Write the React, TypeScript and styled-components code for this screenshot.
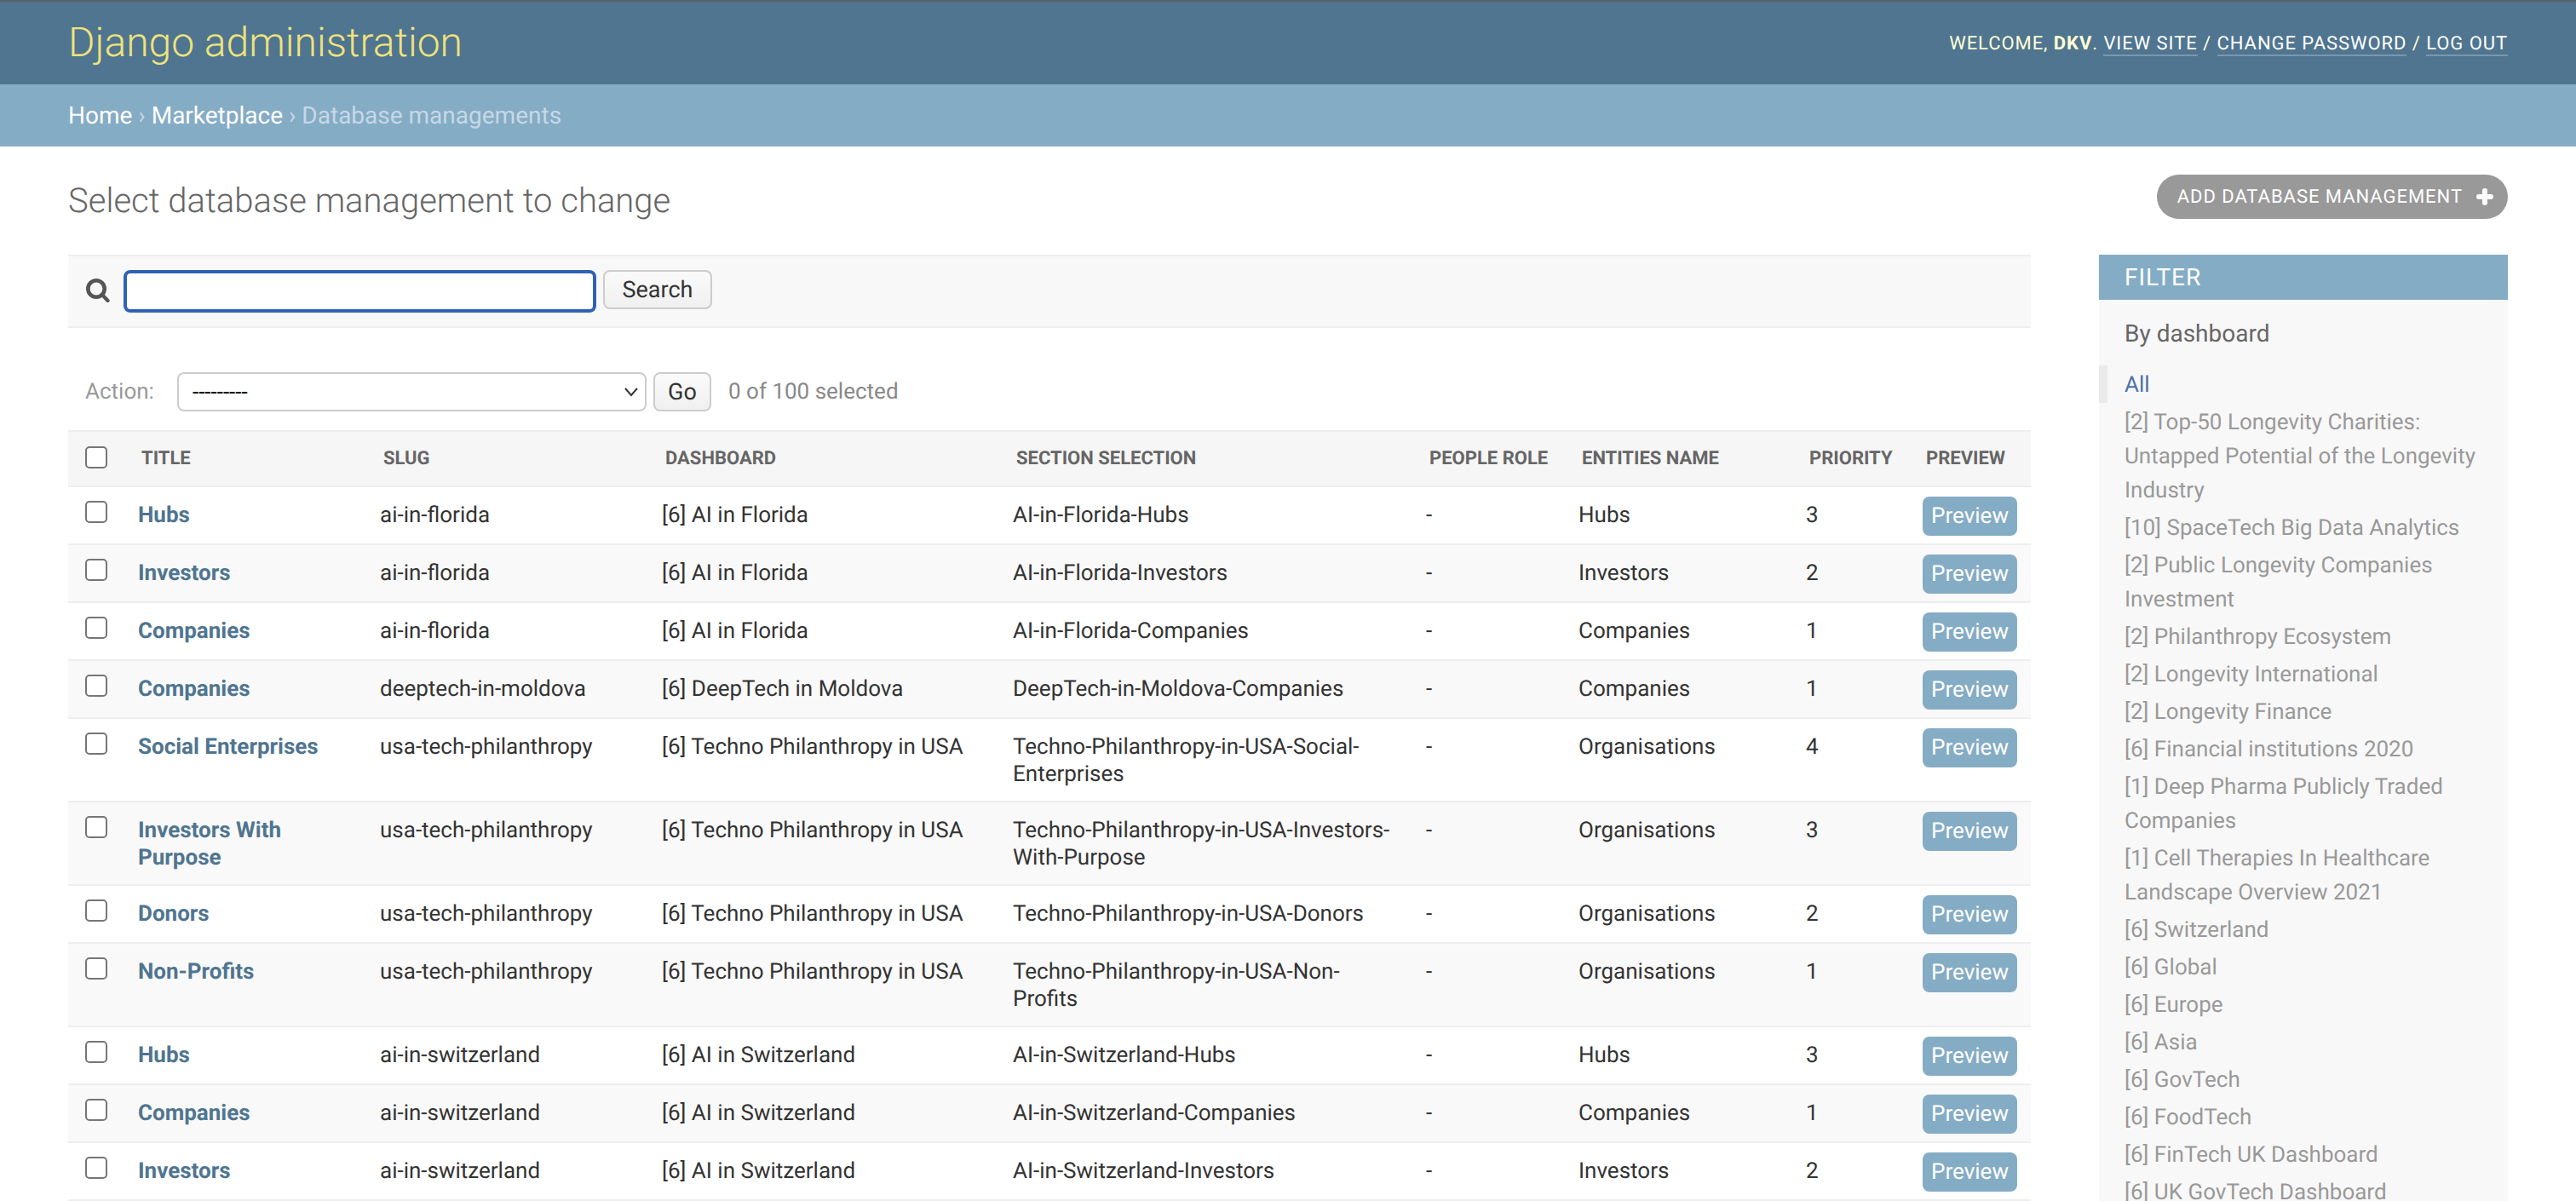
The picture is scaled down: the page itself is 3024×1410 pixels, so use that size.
import React from 'react';
import styled, { createGlobalStyle } from 'styled-components';

const GlobalStyle = createGlobalStyle`
  html, body {
    margin: 0;
    padding: 0;
    height: 100%;
    overflow: hidden;
    background: #fff;
  }
  body {
    font-family: Roboto, "Liberation Sans", Arial, sans-serif;
    font-size: 28px;
    color: #333;
    text-rendering: geometricPrecision;
  }
`;

const columns = [66, 284, 331, 412, 485, 179, 267, 137, 143];

const rows = [
  ['Hubs', 'ai-in-florida', '[6] AI in Florida', 'AI-in-Florida-Hubs', '-', 'Hubs', '3'],
  ['Investors', 'ai-in-florida', '[6] AI in Florida', 'AI-in-Florida-Investors', '-', 'Investors', '2'],
  ['Companies', 'ai-in-florida', '[6] AI in Florida', 'AI-in-Florida-Companies', '-', 'Companies', '1'],
  ['Companies', 'deeptech-in-moldova', '[6] DeepTech in Moldova', 'DeepTech-in-Moldova-Companies', '-', 'Companies', '1'],
  ['Social Enterprises', 'usa-tech-philanthropy', '[6] Techno Philanthropy in USA', 'Techno-Philanthropy-in-USA-Social-Enterprises', '-', 'Organisations', '4'],
  ['Investors With Purpose', 'usa-tech-philanthropy', '[6] Techno Philanthropy in USA', 'Techno-Philanthropy-in-USA-Investors-With-Purpose', '-', 'Organisations', '3'],
  ['Donors', 'usa-tech-philanthropy', '[6] Techno Philanthropy in USA', 'Techno-Philanthropy-in-USA-Donors', '-', 'Organisations', '2'],
  ['Non-Profits', 'usa-tech-philanthropy', '[6] Techno Philanthropy in USA', 'Techno-Philanthropy-in-USA-Non-Profits', '-', 'Organisations', '1'],
  ['Hubs', 'ai-in-switzerland', '[6] AI in Switzerland', 'AI-in-Switzerland-Hubs', '-', 'Hubs', '3'],
  ['Companies', 'ai-in-switzerland', '[6] AI in Switzerland', 'AI-in-Switzerland-Companies', '-', 'Companies', '1'],
  ['Investors', 'ai-in-switzerland', '[6] AI in Switzerland', 'AI-in-Switzerland-Investors', '-', 'Investors', '2'],
];

const headings = ['Title', 'Slug', 'Dashboard', 'Section selection', 'People role', 'Entities name', 'Priority', 'Preview'];

const filters = [
  '[2] Top-50 Longevity Charities: Untapped Potential of the Longevity Industry',
  '[10] SpaceTech Big Data Analytics',
  '[2] Public Longevity Companies Investment',
  '[2] Philanthropy Ecosystem',
  '[2] Longevity International',
  '[2] Longevity Finance',
  '[6] Financial institutions 2020',
  '[1] Deep Pharma Publicly Traded Companies',
  '[1] Cell Therapies In Healthcare Landscape Overview 2021',
  '[6] Switzerland',
  '[6] Global',
  '[6] Europe',
  '[6] Asia',
  '[6] GovTech',
  '[6] FoodTech',
  '[6] FinTech UK Dashboard',
  '[6] UK GovTech Dashboard',
];

function App() {
  return (
    <Page>
      <GlobalStyle />
      <Header>
        <Branding>Django administration</Branding>
        <UserTools>
          Welcome, <strong>dkv</strong>. <TopLink>View site</TopLink> / <TopLink>Change password</TopLink> / <TopLink>Log out</TopLink>
        </UserTools>
      </Header>
      <Breadcrumbs>
        <a>Home</a> <Sep>›</Sep> <a>Marketplace</a> <Sep>›</Sep> Database managements
      </Breadcrumbs>
      <Content>
        <TitleRow>
          <Title>Select database management to change</Title>
          <AddButton>
            Add database management
            <svg width="20" height="20" viewBox="0 0 20 20">
              <path d="M10 3v14M3 10h14" stroke="#fff" strokeWidth="6" strokeLinecap="round" />
            </svg>
          </AddButton>
        </TitleRow>
        <Columns>
          <Main>
            <SearchBar>
              <svg width="28" height="28" viewBox="0 0 28 28">
                <circle cx="12" cy="12" r="9.7" fill="none" stroke="#555" strokeWidth="4.6" />
                <path d="M19 19l6.5 7" fill="none" stroke="#555" strokeWidth="4.2" strokeLinecap="round" />
              </svg>
              <SearchInput />
              <PlainButton $width={128}>Search</PlainButton>
            </SearchBar>
            <Actions>
              <ActionLabel>Action:</ActionLabel>
              <SelectWrap>
                <ActionSelect>
                  <option>---------</option>
                </ActionSelect>
                <Chevron width="20" height="14" viewBox="0 0 20 14">
                  <path d="M3 3l7 8 7-8" fill="none" stroke="#333" strokeWidth="2" />
                </Chevron>
              </SelectWrap>
              <PlainButton $width={68}>Go</PlainButton>
              <Counter>0 of 100 selected</Counter>
            </Actions>
            <Table>
              <colgroup>
                {columns.map((w, i) => (
                  <Col key={i} $width={w} />
                ))}
              </colgroup>
              <thead>
                <tr>
                  <HeadCheckCell>
                    <Check />
                  </HeadCheckCell>
                  {headings.map((h) => (
                    <HeadCell key={h}>{h}</HeadCell>
                  ))}
                </tr>
              </thead>
              <tbody>
                {rows.map((r, i) => (
                  <Row key={i} $even={i % 2 === 1}>
                    <CheckCell>
                      <Check />
                    </CheckCell>
                    <Cell>
                      <TitleLink>{r[0]}</TitleLink>
                    </Cell>
                    {r.slice(1).map((v, j) => (
                      <Cell key={j}>{v}</Cell>
                    ))}
                    <PreviewCell>
                      <PreviewButton>Preview</PreviewButton>
                    </PreviewCell>
                  </Row>
                ))}
              </tbody>
            </Table>
          </Main>
          <Filter>
            <FilterTitle>Filter</FilterTitle>
            <FilterGroup>By dashboard</FilterGroup>
            <FilterList>
              <FilterItem $selected>All</FilterItem>
              {filters.map((f) => (
                <FilterItem key={f}>{f}</FilterItem>
              ))}
            </FilterList>
          </Filter>
        </Columns>
      </Content>
    </Page>
  );
}

const Page = styled.div`
  height: 100vh;
  overflow: hidden;
`;

const Header = styled.div`
  display: flex;
  align-items: center;
  justify-content: space-between;
  box-sizing: border-box;
  height: 99px;
  padding: 0 80px;
  background: #4f7590;
  border-top: 2px solid #5c6068;
`;

const Branding = styled.h1`
  margin: 0 0 2px;
  font-size: 48px;
  font-weight: 300;
  color: #f0e27c;
`;

const UserTools = styled.div`
  margin-top: 1px;
  font-size: 22px;
  letter-spacing: 0.94px;
  text-transform: uppercase;
  color: #ffffd6;

  strong {
    font-weight: 700;
  }
`;

const TopLink = styled.a`
  color: #fff;
  border-bottom: 2px solid rgba(255, 255, 255, 0.25);
`;

const Breadcrumbs = styled.div`
  box-sizing: border-box;
  height: 73px;
  padding: 0 80px;
  line-height: 73px;
  font-size: 28px;
  color: #c5d8e5;
  background: #85acc5;

  a {
    color: #fff;
  }
`;

const Sep = styled.span`
  color: #c5d8e5;
`;

const Content = styled.div`
  padding: 33px 80px 0;
`;

const TitleRow = styled.div`
  display: flex;
  align-items: center;
  justify-content: space-between;
  height: 52px;
  margin-bottom: 42px;
`;

const Title = styled.h1`
  margin: 8px 0 0;
  font-size: 40px;
  font-weight: 300;
  color: #666;
`;

const AddButton = styled.a`
  display: flex;
  align-items: center;
  gap: 16px;
  height: 52px;
  box-sizing: border-box;
  padding: 0 17px 0 24px;
  border-radius: 26px;
  background: #999;
  color: #fff;
  font-size: 22px;
  letter-spacing: 0.96px;
  text-transform: uppercase;
`;

const Columns = styled.div`
  display: flex;
  align-items: flex-start;
  gap: 80px;
`;

const Main = styled.div`
  flex: 1;
  min-width: 0;
`;

const SearchBar = styled.div`
  display: flex;
  align-items: flex-start;
  box-sizing: border-box;
  height: 86px;
  padding: 16px 20px 0;
  background: #f8f8f8;
  border-top: 2px solid #eee;
  border-bottom: 2px solid #eee;

  svg {
    margin: 10px 16px 0 1px;
    flex: none;
  }
`;

const SearchInput = styled.div`
  box-sizing: border-box;
  width: 555px;
  height: 50px;
  margin-right: 8px;
  background: #fff;
  border: 4px solid #2f62b5;
  border-radius: 8px;
`;

const PlainButton = styled.button<{ $width: number }>`
  box-sizing: border-box;
  width: ${(p) => p.$width}px;
  height: 46px;
  padding: 0;
  background: linear-gradient(#fafafa, #f0f0f0);
  border: 2px solid #ccc;
  border-radius: 8px;
  font-family: Roboto, sans-serif;
  font-size: 27px;
  color: #333;
  text-rendering: geometricPrecision;
`;

const Actions = styled.div`
  display: flex;
  align-items: center;
  height: 46px;
  margin: 52px 0 22px;
  padding-left: 20px;
`;

const ActionLabel = styled.label`
  width: 108px;
  font-size: 26px;
  color: #999;
`;

const SelectWrap = styled.div`
  position: relative;
  width: 551px;
  height: 46px;
  margin-right: 8px;
`;

const ActionSelect = styled.select`
  appearance: none;
  box-sizing: border-box;
  width: 100%;
  height: 100%;
  padding: 0 16px;
  background: #fff;
  border: 2px solid #ccc;
  border-radius: 8px;
  font-family: Roboto, sans-serif;
  font-size: 26px;
  color: #000;
`;

const Chevron = styled.svg`
  position: absolute;
  top: 16px;
  right: 8px;
`;

const Counter = styled.span`
  margin: -1px 0 0 20px;
  font-size: 26px;
  color: #888;
`;

const Table = styled.table`
  width: 100%;
  table-layout: fixed;
  border-collapse: separate;
  border-spacing: 0;
`;

const Col = styled.col<{ $width: number }>`
  width: ${(p) => p.$width}px;
`;

const HeadCell = styled.th`
  box-sizing: border-box;
  height: 67px;
  padding: 0 0 0 20px;
  text-align: left;
  vertical-align: middle;
  white-space: nowrap;
  font-size: 22px;
  font-weight: 700;
  text-transform: uppercase;
  color: #666;
  background: #f6f6f6;
  border-top: 2px solid #eee;
  border-bottom: 2px solid #eee;
`;

const HeadCheckCell = styled(HeadCell)`
  padding-bottom: 4px;
`;

const Row = styled.tr<{ $even: boolean }>`
  background: ${(p) => (p.$even ? '#f9f9f9' : '#fff')};
`;

const Cell = styled.td`
  padding: 17px 16px 15px;
  vertical-align: top;
  font-size: 26px;
  line-height: 32px;
  color: #333;
  border-bottom: 2px solid #eee;
`;

const CheckCell = styled(Cell)`
  padding: 16px 0 0 20px;
`;

const PreviewCell = styled(Cell)`
  padding: 11px 16px 9px;
`;

const Check = styled.input.attrs({ type: 'checkbox' })`
  appearance: none;
  display: block;
  box-sizing: border-box;
  width: 26px;
  height: 26px;
  margin: 0;
  background: #fff;
  border: 2px solid #767676;
  border-radius: 5px;
`;

const TitleLink = styled.a`
  font-weight: 700;
  color: #4f7590;
`;

const PreviewButton = styled.a`
  display: block;
  width: 111px;
  height: 46px;
  line-height: 46px;
  text-align: center;
  border-radius: 8px;
  background: #85acc5;
  color: #fff;
  font-size: 26px;
`;

const Filter = styled.div`
  flex: none;
  width: 480px;
  background: #f8f8f8;
`;

const FilterTitle = styled.h2`
  margin: 0;
  box-sizing: border-box;
  height: 53px;
  padding: 0 30px;
  line-height: 53px;
  font-size: 28px;
  font-weight: 400;
  letter-spacing: 1px;
  text-transform: uppercase;
  color: #fff;
  background: #85acc5;
`;

const FilterGroup = styled.h3`
  margin: 0;
  padding: 20px 30px 0;
  height: 77px;
  box-sizing: border-box;
  line-height: 40px;
  font-size: 28px;
  font-weight: 400;
  color: #666;
`;

const FilterList = styled.ul`
  list-style: none;
  margin: 0;
  padding: 0;
`;

const FilterItem = styled.li<{ $selected?: boolean }>`
  padding: 3px 30px 1px ${(p) => (p.$selected ? '20px' : '30px')};
  line-height: 40px;
  font-size: 26px;
  color: ${(p) => (p.$selected ? '#4a72aa' : '#999')};
  border-left: ${(p) => (p.$selected ? '10px solid #eaeaea' : 'none')};
`;

export default App;
